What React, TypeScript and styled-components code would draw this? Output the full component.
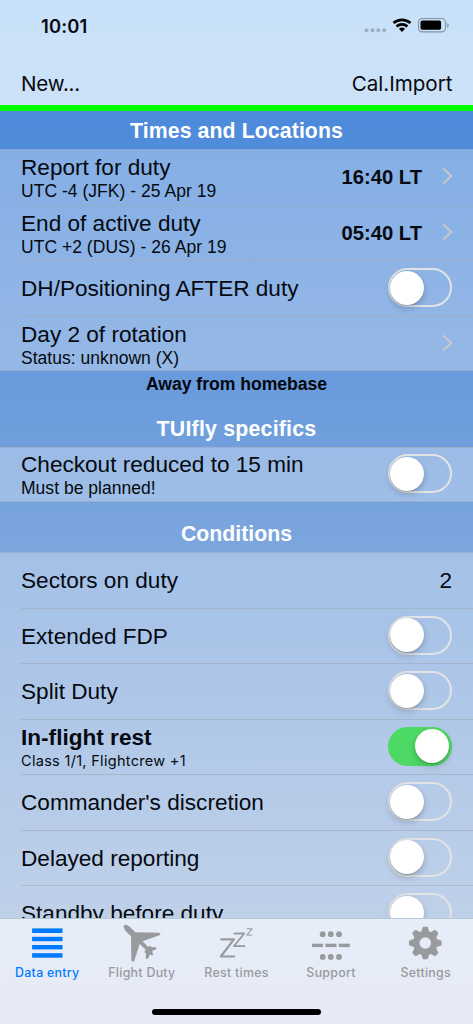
import React from "react";
import styled, { createGlobalStyle } from "styled-components";

const GlobalStyle = createGlobalStyle`
  * { box-sizing: border-box; }
  body { margin: 0; overflow: hidden; }
`;

const helvetica = `"Liberation Sans", Arial, sans-serif`;
const system = `Inter, "Liberation Sans", sans-serif`;

const Screen = styled.div`
  width: 473px;
  height: 1024px;
  display: flex;
  flex-direction: column;
  overflow: hidden;
  color: #060a10;
  font-family: ${helvetica};
`;

const TopArea = styled.header`
  flex: none;
  height: 111px;
  display: flex;
  flex-direction: column;
  background: linear-gradient(180deg, #c8e1f9 0%, #cbe2f8 50%, #cce1f8 100%);
  border-bottom: 6px solid #00ff00;
`;

const StatusBar = styled.div`
  height: 52px;
  display: flex;
  align-items: center;
  justify-content: space-between;
  padding: 0 24px 0 41px;
`;

const Clock = styled.time`
  font: 600 18.4px/24px ${system};
  letter-spacing: 0.12px;
`;

const StatusIcons = styled.svg`
  display: block;
  width: 86px;
  height: 18px;
  overflow: visible;
`;

const NavBar = styled.nav`
  flex: 1;
  display: flex;
  justify-content: space-between;
  padding: 18px 20.5px 0 21px;
`;

const NavButton = styled.button<{ $spacing: number }>`
  border: 0;
  padding: 0;
  height: 28px;
  background: none;
  color: #070b10;
  font: 400 20.6px/28px ${system};
  letter-spacing: ${(p) => p.$spacing}px;
`;

const List = styled.main`
  flex: 1;
  min-height: 0;
  overflow: hidden;
  background: linear-gradient(180deg, #4c8ada 0%, #a4bde0 100%);
`;

const SectionHead = styled.div<{ $height: number }>`
  height: ${(p) => p.$height}px;
  display: flex;
  flex-direction: column;
  align-items: center;
  justify-content: flex-end;
`;

const SectionTitle = styled.h2<{ $spacing: number }>`
  margin: 0;
  height: 36px;
  color: #fff;
  font: 700 21.3px/36px ${helvetica};
  letter-spacing: ${(p) => p.$spacing}px;
  white-space: nowrap;
`;

const FootNote = styled.p`
  margin: 0 0 auto;
  color: #04080e;
  font: 700 17.6px/26px ${helvetica};
  letter-spacing: -0.02px;
`;

const Group = styled.section`
  background: rgba(255, 255, 255, 0.3);
  box-shadow:
    inset 0 1px 0 rgba(150, 165, 185, 0.55),
    inset 0 -1px 0 rgba(150, 165, 185, 0.55);
`;

const Row = styled.div`
  height: 55.5px;
  margin-left: 21px;
  padding-right: 21px;
  display: flex;
  align-items: center;
  justify-content: space-between;
  & + & {
    border-top: 1px solid rgba(160, 169, 182, 0.6);
  }
`;

const Labels = styled.div`
  display: flex;
  flex-direction: column;
  padding-top: 1.5px;
  white-space: nowrap;
`;

const Label = styled.span<{ $bold?: boolean }>`
  font-size: 22.6px;
  line-height: 26px;
  font-weight: ${(p) => (p.$bold ? 700 : 400)};
`;

const SoloLabel = styled(Label)`
  padding-top: 1.5px;
`;

const Detail = styled.span<{ $system?: boolean }>`
  font-family: ${(p) => (p.$system ? system : helvetica)};
  font-size: ${(p) => (p.$system ? 14.5 : 17.5)}px;
  line-height: 20px;
  letter-spacing: ${(p) => (p.$system ? 0.3 : 0.03)}px;
`;

const Trailing = styled.div`
  display: flex;
  align-items: center;
  gap: 20px;
`;

const Value = styled.span<{ $bold?: boolean }>`
  padding-top: 2px;
  font-size: ${(p) => (p.$bold ? 20.2 : 22.6)}px;
  font-weight: ${(p) => (p.$bold ? 700 : 400)};
`;

const Track = styled.div<{ $on?: boolean }>`
  width: 64.5px;
  height: 39px;
  margin-bottom: 1.5px;
  padding: 0.6px;
  display: flex;
  justify-content: ${(p) => (p.$on ? "flex-end" : "flex-start")};
  border: 2px solid ${(p) => (p.$on ? "#4cd964" : "#e2e3e5")};
  border-radius: 20px;
  background: ${(p) => (p.$on ? "#4cd964" : "transparent")};
`;

const Knob = styled.div`
  width: 34px;
  height: 34px;
  border-radius: 50%;
  background: #fff;
  box-shadow: 0 3px 7px rgba(0, 0, 0, 0.2), 0 1px 1px rgba(0, 0, 0, 0.16);
`;

const ChevronSvg = styled.svg`
  display: block;
  width: 10px;
  height: 18px;
  margin-bottom: 1px;
  overflow: visible;
`;

const TabBar = styled.footer`
  flex: none;
  height: 106px;
  display: flex;
  flex-direction: column;
  justify-content: space-between;
  align-items: center;
  border-top: 1px solid #b8c6d9;
  background: linear-gradient(180deg, #e6eef8 0%, #e6ebf7 60%, #e6eaf7 100%);
`;

const Tabs = styled.div`
  width: 100%;
  display: flex;
`;

const Tab = styled.div<{ $active?: boolean }>`
  flex: 1;
  display: flex;
  flex-direction: column;
  align-items: center;
  color: ${(p) => (p.$active ? "#007aff" : "#989a9d")};
`;

const TabIcon = styled.svg`
  display: block;
  width: 44px;
  height: 44px;
`;

const TabLabel = styled.span`
  font: 500 12.4px/16px ${system};
  margin-top: 2px;
  letter-spacing: 0.28px;
  white-space: nowrap;
`;

const HomeIndicator = styled.div`
  width: 169px;
  height: 6px;
  margin-bottom: 9px;
  border-radius: 3px;
  background: #000;
`;

function Toggle({ on }: { on?: boolean }) {
  return (
    <Track $on={on} role="switch" aria-checked={!!on}>
      <Knob />
    </Track>
  );
}

function Chevron() {
  return (
    <ChevronSvg viewBox="0 0 10 18">
      <path d="M1.200 1.600 9.200 9l-8 7.400" fill="none" stroke="#c5c7cc" strokeWidth="2.1" />
    </ChevronSvg>
  );
}

function SystemIcons() {
  return (
    <StatusIcons viewBox="0 0 86 18">
      <g fill="#9eb1c4">
        <circle cx="3.500" cy="13.300" r="2" />
        <circle cx="9.500" cy="13.300" r="2" />
        <circle cx="15.300" cy="13.300" r="2" />
        <circle cx="21.200" cy="13.300" r="2" />
      </g>
      <g transform="translate(1.500 0)">
        <g fill="none" stroke="#000" strokeWidth="2.7">
          <path d="M29 6.100a12.600 12.600 0 0 1 17 0" />
          <path d="M32 9.500a8.200 8.200 0 0 1 11 0" />
        </g>
        <path d="M34.400 11.800a4.700 4.700 0 0 1 6.200 0l-3.100 3.100z" />
        <rect x="54" y="1.500" width="27" height="13.400" rx="3.800" fill="none" stroke="#8294a5" strokeWidth="1.200" />
        <rect x="56" y="3.600" width="20.600" height="9.200" rx="1.800" />
        <path d="M82.700 6v4.800c2-.8 2-4 0-4.800z" fill="#8294a5" />
      </g>
    </StatusIcons>
  );
}

const icons = {
  data: (
    <g fill="currentColor" transform="translate(.6 0)">
      <rect x="6.500" y="9.400" width="30.400" height="4.600" />
      <rect x="6.500" y="17.800" width="30.400" height="4.400" />
      <rect x="6.500" y="26" width="30.400" height="4.400" />
      <rect x="6.500" y="34.200" width="30.400" height="4.500" />
    </g>
  ),
  plane: (
    <g transform="translate(-10 -4) scale(.33333)">
      <path
        fill="currentColor"
        d="M42 38Q38 29 48 29Q54 30 60 36L76 52 145 53Q154 54 150 60L98 79 114 95Q118 94 119 93Q124 92 124 97L137 97Q141 98 139 103L127 107 128 115Q132 121 125 121L120 118 114 131Q108 133 107 128L108 115Q102 114 104 108L107 104 89 87 73 137Q68 144 64 136L63 64 49 50Q43 44 42 38Z"
      />
    </g>
  ),
  rest: (
    <g fill="none" stroke="currentColor" strokeLinejoin="round" strokeLinecap="round">
      <path d="M7.300 20.400h12.600L6.800 37.500h13.400" strokeWidth="2.200" />
      <path d="M20.400 14.500h9.800l-10.300 12.700h10.600" strokeWidth="1.800" />
      <path d="M33.100 9.800h4.900l-5.100 6.200h5" strokeWidth="1.100" />
    </g>
  ),
  support: (
    <g fill="currentColor">
      <circle cx="13.700" cy="15.200" r="2.900" />
      <circle cx="21.800" cy="15.200" r="2.900" />
      <circle cx="30" cy="15.200" r="2.900" />
      <rect x="3" y="24.700" width="11" height="3.400" />
      <rect x="16.500" y="24.700" width="11" height="3.400" />
      <rect x="29.800" y="24.700" width="11" height="3.400" />
      <circle cx="13.700" cy="37.900" r="2.900" />
      <circle cx="21.800" cy="37.900" r="2.900" />
      <circle cx="30" cy="37.900" r="2.900" />
    </g>
  ),
  settings: (
    <g transform="translate(21.300 24)">
      <circle r="9" fill="none" stroke="currentColor" strokeWidth="6.400" />
      {[0, 45, 90, 135, 180, 225, 270, 315].map((angle) => (
        <path
          key={angle}
          transform={`rotate(${angle})`}
          d="M-4.200-10.500-2.800-15.100Q-2.600-16.300-1.600-16.300H1.600Q2.600-16.300 2.800-15.100L4.200-10.500Z"
          fill="currentColor"
        />
      ))}
    </g>
  ),
};

const tabs: { icon: keyof typeof icons; label: string }[] = [
  { icon: "data", label: "Data entry" },
  { icon: "plane", label: "Flight Duty" },
  { icon: "rest", label: "Rest times" },
  { icon: "support", label: "Support" },
  { icon: "settings", label: "Settings" },
];

const switches = ["Commander's discretion", "Delayed reporting", "Standby before duty"];

export default function App() {
  return (
    <Screen>
      <GlobalStyle />
      <TopArea>
        <StatusBar>
          <Clock>10:01</Clock>
          <SystemIcons />
        </StatusBar>
        <NavBar>
          <NavButton $spacing={-0.2}>New...</NavButton>
          <NavButton $spacing={0}>Cal.Import</NavButton>
        </NavBar>
      </TopArea>

      <List>
        <SectionHead $height={38}>
          <SectionTitle $spacing={0.08}>Times and Locations</SectionTitle>
        </SectionHead>
        <Group>
          <Row>
            <Labels>
              <Label>Report for duty</Label>
              <Detail>UTC -4 (JFK) - 25 Apr 19</Detail>
            </Labels>
            <Trailing>
              <Value $bold>16:40 LT</Value>
              <Chevron />
            </Trailing>
          </Row>
          <Row>
            <Labels>
              <Label>End of active duty</Label>
              <Detail>UTC +2 (DUS) - 26 Apr 19</Detail>
            </Labels>
            <Trailing>
              <Value $bold>05:40 LT</Value>
              <Chevron />
            </Trailing>
          </Row>
          <Row>
            <SoloLabel>DH/Positioning AFTER duty</SoloLabel>
            <Toggle />
          </Row>
          <Row>
            <Labels>
              <Label>Day 2 of rotation</Label>
              <Detail>Status: unknown (X)</Detail>
            </Labels>
            <Chevron />
          </Row>
        </Group>

        <SectionHead $height={75.5}>
          <FootNote>Away from homebase</FootNote>
          <SectionTitle $spacing={0.22}>TUIfly specifics</SectionTitle>
        </SectionHead>
        <Group>
          <Row>
            <Labels>
              <Label>Checkout reduced to 15 min</Label>
              <Detail>Must be planned!</Detail>
            </Labels>
            <Toggle />
          </Row>
        </Group>

        <SectionHead $height={50}>
          <SectionTitle $spacing={0}>Conditions</SectionTitle>
        </SectionHead>
        <Group>
          <Row>
            <SoloLabel>Sectors on duty</SoloLabel>
            <Value>2</Value>
          </Row>
          <Row>
            <SoloLabel>Extended FDP</SoloLabel>
            <Toggle />
          </Row>
          <Row>
            <SoloLabel>Split Duty</SoloLabel>
            <Toggle />
          </Row>
          <Row>
            <Labels>
              <Label $bold>In-flight rest</Label>
              <Detail $system>Class 1/1, Flightcrew +1</Detail>
            </Labels>
            <Toggle on />
          </Row>
          {switches.map((name) => (
            <Row key={name}>
              <SoloLabel>{name}</SoloLabel>
              <Toggle />
            </Row>
          ))}
        </Group>
      </List>

      <TabBar>
        <Tabs>
          {tabs.map((tab) => (
            <Tab key={tab.label} $active={tab.icon === "data"}>
              <TabIcon viewBox="0 0 44 44">{icons[tab.icon]}</TabIcon>
              <TabLabel>{tab.label}</TabLabel>
            </Tab>
          ))}
        </Tabs>
        <HomeIndicator />
      </TabBar>
    </Screen>
  );
}
